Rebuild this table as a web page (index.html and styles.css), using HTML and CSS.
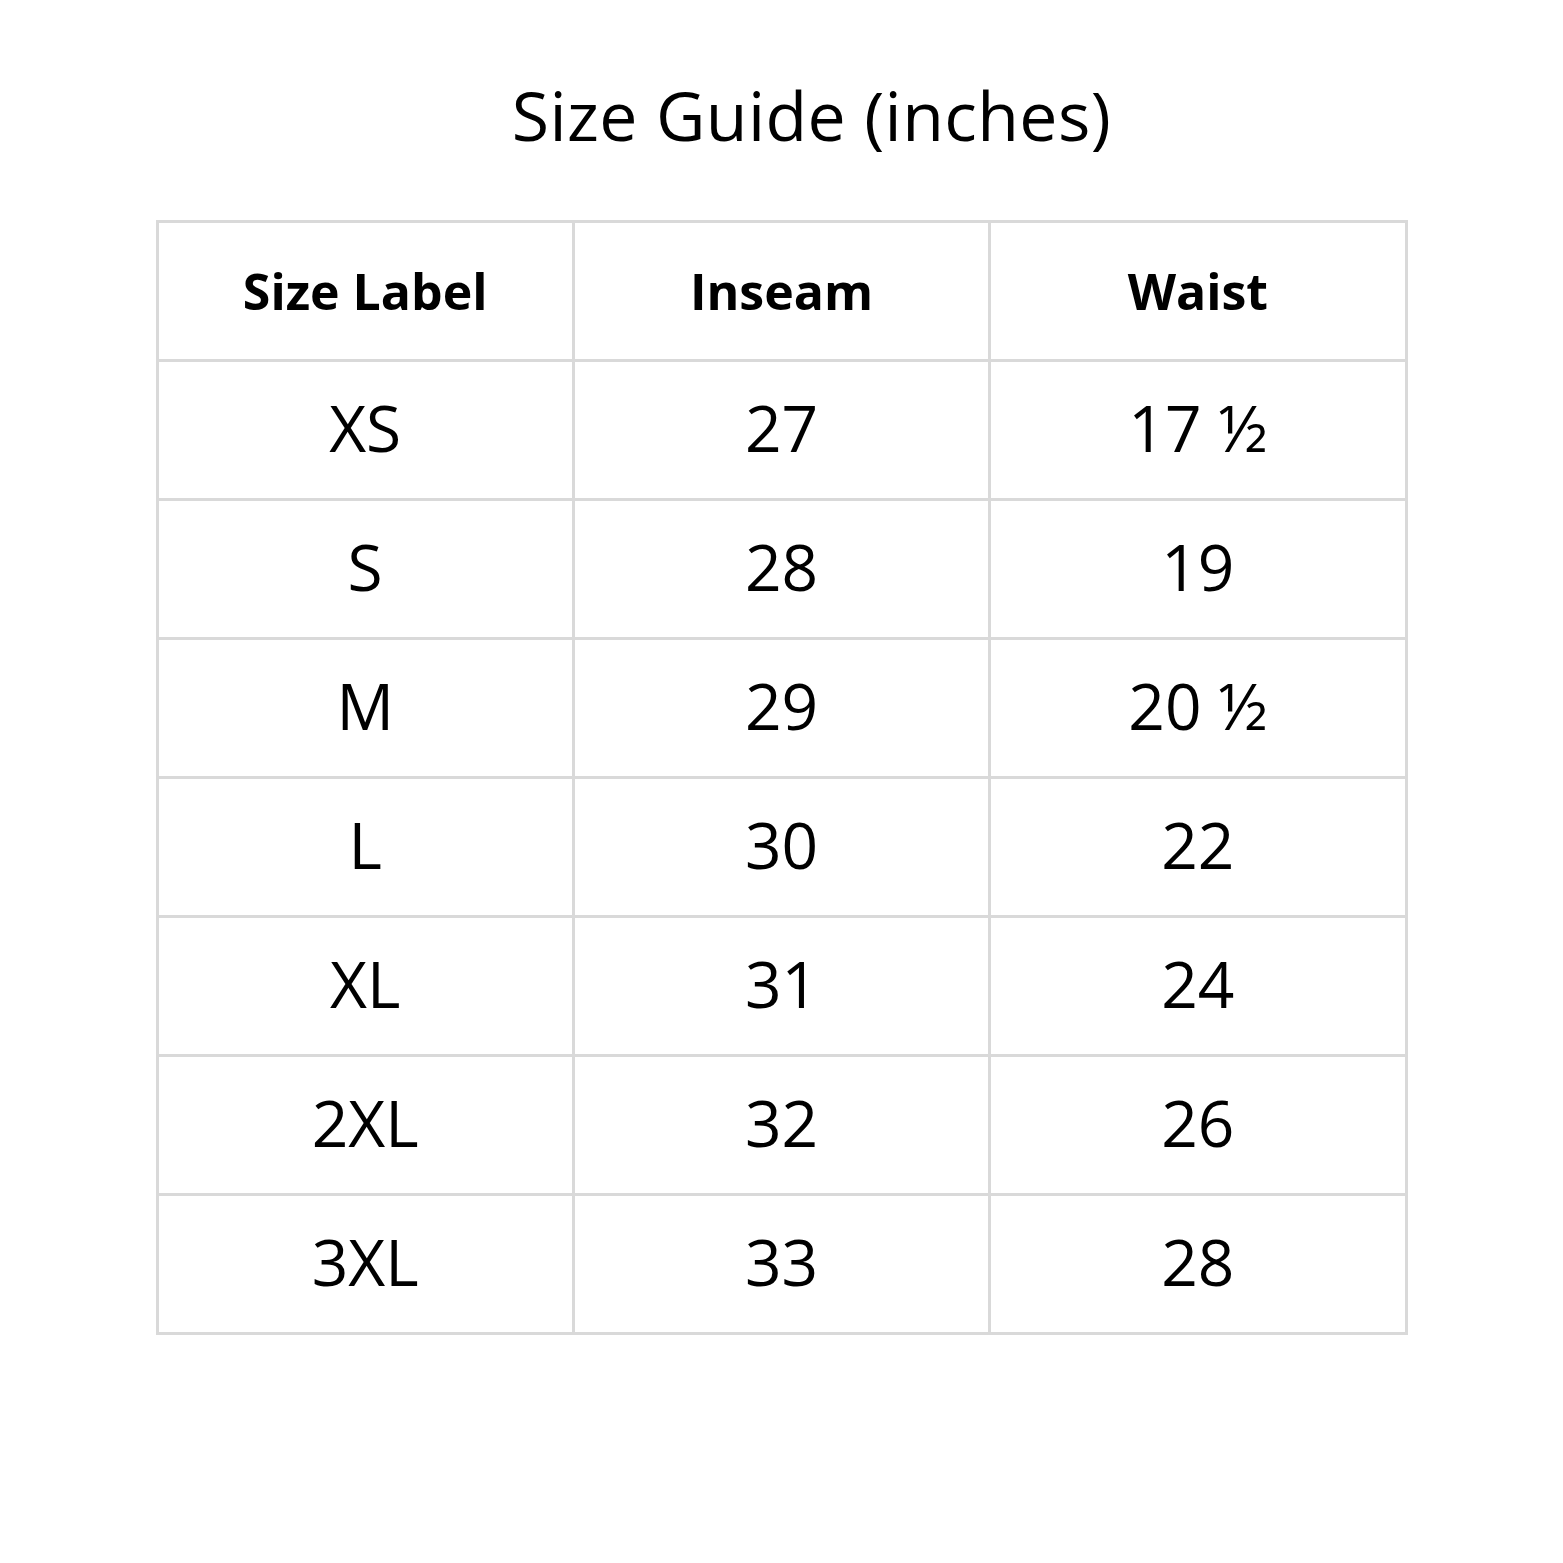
FILE: index.html
```html
<!DOCTYPE html>
<html>
<head>
<meta charset="utf-8">
<link rel="stylesheet" href="styles.css">
</head>
<body>
<div class="page">
  <h1 class="title">Size Guide (inches)</h1>
  <table class="sizes">
    <thead>
      <tr><th>Size Label</th><th>Inseam</th><th>Waist</th></tr>
    </thead>
    <tbody>
      <tr><td>XS</td><td>27</td><td>17 ½</td></tr>
      <tr><td>S</td><td>28</td><td>19</td></tr>
      <tr><td>M</td><td>29</td><td>20 ½</td></tr>
      <tr><td>L</td><td>30</td><td>22</td></tr>
      <tr><td>XL</td><td>31</td><td>24</td></tr>
      <tr><td>2XL</td><td>32</td><td>26</td></tr>
      <tr><td>3XL</td><td>33</td><td>28</td></tr>
    </tbody>
  </table>
</div>
</body>
</html>
```
FILE: styles.css
```css
html, body {
  margin: 0;
  padding: 0;
  background: #ffffff;
}
.page {
  width: 1563px;
  height: 1563px;
  display: flex;
  flex-direction: column;
  align-items: center;
  font-family: "Open Sans", sans-serif;
  color: #000;
}
.title {
  margin: 73px 0 0 0;
  padding-left: 60px;
  font-weight: 400;
  font-size: 68px;
  line-height: 84px;
  letter-spacing: 0.4px;
}
.sizes {
  margin-top: 63px;
  border-collapse: collapse;
  width: 1252px;
  table-layout: fixed;
}
.sizes th, .sizes td {
  border: 3px solid #d9d9d9;
  height: 136px;
  padding: 0;
  text-align: center;
  vertical-align: middle;
}
.sizes th {
  font-size: 50px;
  font-weight: 700;
}
.sizes td {
  font-size: 64px;
  font-weight: 400;
  height: 130px;
  padding-bottom: 6px;
}
```
